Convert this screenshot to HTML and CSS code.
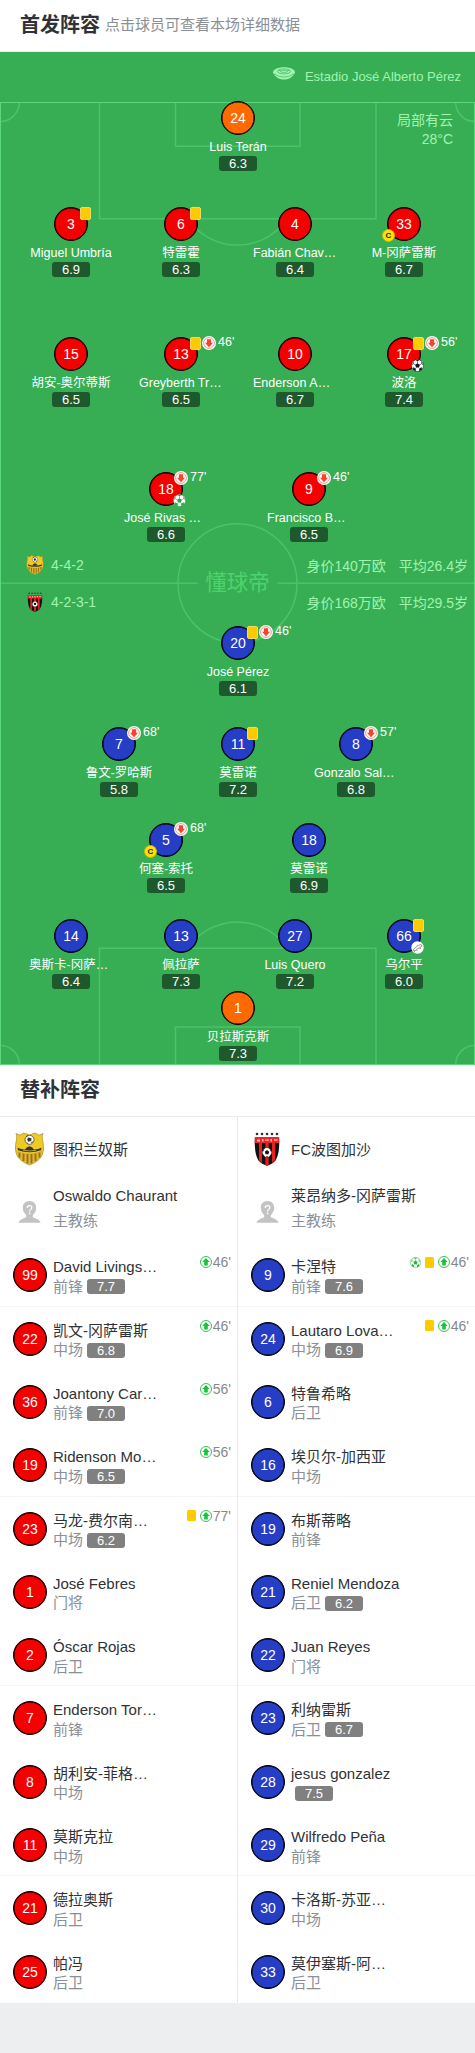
FILE: index.html
```html
<!DOCTYPE html>
<html lang="zh">
<head>
<meta charset="utf-8">
<title>首发阵容</title>
<link rel="stylesheet" href="styles.css">
</head>
<body>
<svg class="defs" width="0" height="0" aria-hidden="true">
  <symbol id="down" viewBox="0 0 14 14"><circle cx="7" cy="7" r="7" fill="#fff"/><circle cx="7" cy="7" r="5.400" fill="none" stroke="#f58a78" stroke-width=".9"/><path d="M4.900 3.200h4.200v3.600H11L7 11.200 3 6.800h1.900z" fill="#f8432c"/></symbol>
  <symbol id="up" viewBox="0 0 12 12"><circle cx="6" cy="6" r="5.500" fill="#fff" stroke="#35c553"/><path d="M4.200 9.600V6H2.300L6 1.900 9.700 6H7.800v3.600z" fill="#18c23c"/></symbol>
  <symbol id="ball" viewBox="0 0 14 14"><circle cx="7" cy="7" r="6.500" fill="#fff" stroke="currentColor" stroke-width=".6"/><path fill="currentColor" d="M7 4.500l2.500 1.800-.9 2.900H5.400l-.9-2.900zM4.600 1L7 2.400 9.400 1zM.6 6.700l2.200-1.500.3-2.500zM13.400 6.700l-2.200-1.500-.3-2.500zM2.100 11.300l.5-2.700 2.500 2.300.1 2.200zM11.900 11.300l-.5-2.700-2.500 2.300-.1 2.200z"/><path stroke="currentColor" stroke-width=".6" d="M7 2.300v2.400M2.800 5.200l1.900 1.200M11.200 5.200L9.300 6.400M5.600 9.100l-.9 1.600M8.400 9.100l.9 1.600"/></symbol>
  <symbol id="boot" viewBox="0 0 14 14"><circle cx="7" cy="7" r="6.700" fill="#fff"/><path d="M2.200 9.300C4 8 6 6.800 6.900 4.500l1.500.3 2.300-1.300 1.200 2.200c-1.500 1.200-3 2-4.500 2.400L4.500 10.500l-1.700.2z" fill="#f4f4f4" stroke="#777" stroke-width=".8"/><path d="M3.500 11.600l.8-.8M6 10.700l.8-.9M9.700 8.700l.6-1" stroke="#777"/></symbol>
  <symbol id="yellow-crest" viewBox="0 0 29 34"><path d="M1 1.500l4 1.700L8.500 1l6 1.800L20.500 1 24 3.200l4-1.700c-2 5 .8 8 .5 15.500C28 26 22 30 14.500 33 7 30 1 26 .5 17 .2 9.500 3 6.500 1 1.500z" fill="#eecb24" stroke="#a58a2c" stroke-width=".7"/><path d="M2 18.500q12.500 5.500 25 0c0 7-5.500 11-12.500 14-7-3-12.500-7-12.500-14z" fill="#e3b72b"/><path d="M4.500 20.500v5M8.500 21.500v7.500M12.500 22v9.500M16.500 22v9.500M20.500 21.500v7.500M24.500 20.500v5" stroke="#98701f" stroke-width="1.900"/><path d="M2.500 15.800q4 1.900 7.500 1.700l2-2.300 2.500-1 2.500 1 2 2.300q3.500.2 7.500-1.700l-.5 2.500q-11.500 4-23 0z" fill="#3a3823"/><path d="M8 18.300q6.500 1.300 13 0" stroke="#d5b538" fill="none" stroke-width=".8"/><circle cx="14.500" cy="7.800" r="4.500" fill="#fff" stroke="#333" stroke-width=".7"/><path d="M13 5.500l3.500.8-.3 2.700-3 .8-1-2.300zM11 4l2-.8-1 2zM18 9.300l-1 2-1.200-1zM11.500 10.500l1.500.5-.3 1z" fill="#333"/></symbol>
  <symbol id="red-crest" viewBox="0 0 26 34"><g fill="#283429"><circle cx="3" cy="2" r="1.300"/><circle cx="8" cy="2" r="1.300"/><circle cx="13" cy="2" r="1.300"/><circle cx="18" cy="2" r="1.300"/><circle cx="23" cy="2" r="1.300"/></g><path d="M1 5.500h24c.8 10-.5 18-3.500 23-2.500 3-6 4.500-8.500 5.300C10.500 33 7 31.500 4.500 28.500 1.500 23.500.2 15.500 1 5.500z" fill="#111"/><path d="M5 10h3v21l-3-3zM11.400 10h3.200v23L13 33.700l-1.600-.6zM18 10h3v18l-3 3z" fill="#ec1e1f"/><path d="M.8 5h24.400l.1 6H.7z" fill="#ee2427"/><path d="M3 7.500h3v2H3zM8 7h1.500v2.500H8zM11 7.500h4v1.300h-4zM16.500 7H18v2.500h-1.500zM20 7.300h3.500v1.400H20z" fill="#fff" opacity=".7"/><circle cx="13" cy="20.500" r="4.500" fill="#fff"/><path d="M13 18l2.200 1.700-.8 2.600h-2.800l-.8-2.600zM8.200 17.800l2.200-.5L9 19.800zM17.800 17.800l-2.200-.5L17 19.800zM11.800 25.200L13 23.700l1.200 1.500zM8.600 21.800l1.800 2.300-1.300.1zM17.400 21.800l-1.800 2.300 1.300.1z" fill="#151515"/></symbol>
  <symbol id="avatar" viewBox="0 0 24 23"><path d="M12 0c4.200 0 7 2.900 7 7 0 3.200-1.300 5.500-3.200 7.300-.8 1-.6 2.700.6 3.200 3 1.200 6.200 2.200 7.300 5.200H.3c1.100-3 4.300-4 7.300-5.200 1.200-.5 1.400-2.200.6-3.200C6.300 12.500 5 10.200 5 7c0-4.100 2.800-7 7-7z" fill="#c3c3c3"/><path d="M9.600 7.200c0-3.200 4.900-3.300 4.900-.4 0 1.900-2.400 2-2.400 4.100" fill="none" stroke="#fff" stroke-width="1.300"/><circle cx="12.100" cy="13" r=".9" fill="#fff"/></symbol>
</svg>

<header class="head"><h2>首发阵容</h2><span class="hint">点击球员可查看本场详细数据</span></header>

<section class="pitch">
  <div class="stadium">
    <svg width="22" height="13" viewBox="0 0 22 13"><path d="M0 5.500C0 2.500 5 .3 11 .3s11 2.200 11 5.200C20.500 9.500 16 12.600 11 12.600S1.500 9.500 0 5.500z" fill="#a0f4b0"/><ellipse cx="11" cy="4.400" rx="6.500" ry="2.500" fill="none" stroke="#37ae54" stroke-width=".6"/><ellipse cx="11" cy="4.300" rx="3.500" ry="1.100" fill="none" stroke="#37ae54" stroke-width=".6"/><path d="M.5 6.600q10.500 7 21 0M5 3l3 1M17 3l-3 1" fill="none" stroke="#37ae54" stroke-width=".6"/></svg>
    <span>Estadio José Alberto Pérez</span>
  </div>
  <svg class="lines" width="475" height="963" viewBox="0 0 475 963">
    <g fill="none" stroke="#4ac369" stroke-width="1.500">
      <path d="M99.500 0v116.700h276.500V0M175.500 0v44.300H300V0M188 117a60 60 0 0 0 99 0"/>
      <path d="M99.500 963V846.300h276.500V963M175.500 963v-38H300v38M188 846a60 60 0 0 1 99 0"/>
      <circle cx="237.500" cy="481.300" r="59.500"/>
      <path d="M0 481.300h197.500M277.500 481.300H475M0 19.500A19 19 0 0 0 19.300 0M475 19.500A19 19 0 0 1 455.700 0M0 943.500A19 19 0 0 1 19.300 963M475 943.500A19 19 0 0 0 455.700 963"/>
    </g>
    <rect x=".5" y=".5" width="474" height="962" fill="none" stroke="#5bd77b"/>
  </svg>
  <div class="weather">局部有云<br>28°C</div>
  <div class="brand">懂球帝</div>
  <div class="team-info home"><svg class="crest"><use href="#yellow-crest"/></svg><span>4-4-2</span><span class="value">身价140万欧</span><span>平均26.4岁</span></div>
  <div class="team-info away"><svg class="crest"><use href="#red-crest"/></svg><span>4-2-3-1</span><span class="value">身价168万欧</span><span>平均29.5岁</span></div>

  <div class="player keeper" style="left:238px;top:49px"><b class="num">24</b><span class="name">Luis Terán</span><i class="rate">6.3</i></div>

  <div class="player red" style="left:71px;top:155px"><b class="num">3</b><span class="name">Miguel Umbría</span><i class="rate">6.9</i><div class="events"><i class="card"></i></div></div>
  <div class="player red" style="left:181px;top:155px"><b class="num">6</b><span class="name">特雷霍</span><i class="rate">6.3</i><div class="events"><i class="card"></i></div></div>
  <div class="player red" style="left:295px;top:155px"><b class="num">4</b><span class="name cut">Fabián Chav…</span><i class="rate">6.4</i></div>
  <div class="player red" style="left:404px;top:155px"><b class="num">33</b><span class="name">M-冈萨雷斯</span><i class="rate">6.7</i><i class="captain">C</i></div>

  <div class="player red" style="left:71px;top:285px"><b class="num">15</b><span class="name">胡安-奥尔蒂斯</span><i class="rate">6.5</i></div>
  <div class="player red" style="left:181px;top:285px"><b class="num">13</b><span class="name cut">Greyberth Tr…</span><i class="rate">6.5</i><div class="events"><i class="card"></i><svg class="sub"><use href="#down"/></svg><span>46'</span></div></div>
  <div class="player red" style="left:295px;top:285px"><b class="num">10</b><span class="name cut">Enderson A…</span><i class="rate">6.7</i></div>
  <div class="player red" style="left:404px;top:285px"><b class="num">17</b><span class="name">波洛</span><i class="rate">7.4</i><div class="events"><i class="card"></i><svg class="sub"><use href="#down"/></svg><span>56'</span></div><svg class="extra black"><use href="#ball"/></svg></div>

  <div class="player red" style="left:166px;top:420px"><b class="num">18</b><span class="name cut">José Rivas …</span><i class="rate">6.6</i><div class="events"><svg class="sub"><use href="#down"/></svg><span>77'</span></div><svg class="extra green"><use href="#ball"/></svg></div>
  <div class="player red" style="left:309px;top:420px"><b class="num">9</b><span class="name cut">Francisco B…</span><i class="rate">6.5</i><div class="events"><svg class="sub"><use href="#down"/></svg><span>46'</span></div></div>

  <div class="player blue" style="left:238px;top:574px"><b class="num">20</b><span class="name">José Pérez</span><i class="rate">6.1</i><div class="events"><i class="card"></i><svg class="sub"><use href="#down"/></svg><span>46'</span></div></div>

  <div class="player blue" style="left:119px;top:675px"><b class="num">7</b><span class="name">鲁文-罗哈斯</span><i class="rate">5.8</i><div class="events"><svg class="sub"><use href="#down"/></svg><span>68'</span></div></div>
  <div class="player blue" style="left:238px;top:675px"><b class="num">11</b><span class="name">莫雷诺</span><i class="rate">7.2</i><div class="events"><i class="card"></i></div></div>
  <div class="player blue" style="left:356px;top:675px"><b class="num">8</b><span class="name cut">Gonzalo Sal…</span><i class="rate">6.8</i><div class="events"><svg class="sub"><use href="#down"/></svg><span>57'</span></div></div>

  <div class="player blue" style="left:166px;top:771px"><b class="num">5</b><span class="name">何塞-索托</span><i class="rate">6.5</i><div class="events"><svg class="sub"><use href="#down"/></svg><span>68'</span></div><i class="captain">C</i></div>
  <div class="player blue" style="left:309px;top:771px"><b class="num">18</b><span class="name">莫雷诺</span><i class="rate">6.9</i></div>

  <div class="player blue" style="left:71px;top:867px"><b class="num">14</b><span class="name cut">奥斯卡-冈萨…</span><i class="rate">6.4</i></div>
  <div class="player blue" style="left:181px;top:867px"><b class="num">13</b><span class="name">佩拉萨</span><i class="rate">7.3</i></div>
  <div class="player blue" style="left:295px;top:867px"><b class="num">27</b><span class="name">Luis Quero</span><i class="rate">7.2</i></div>
  <div class="player blue" style="left:404px;top:867px"><b class="num">66</b><span class="name">乌尔平</span><i class="rate">6.0</i><div class="events"><i class="card"></i></div><svg class="extra"><use href="#boot"/></svg></div>

  <div class="player keeper" style="left:238px;top:939px"><b class="num">1</b><span class="name">贝拉斯克斯</span><i class="rate">7.3</i></div>
</section>

<header class="head subs-head"><h2>替补阵容</h2></header>

<section class="bench">
  <div class="col red">
    <div class="team"><svg class="badge"><use href="#yellow-crest"/></svg><span>图积兰奴斯</span></div>
    <div class="coach"><svg class="avatar"><use href="#avatar"/></svg><div><p>Oswaldo Chaurant</p><p class="role">主教练</p></div></div>
    <div class="row line"><b class="num">99</b><div class="who"><p>David Livings…</p><p class="role">前锋<i class="rate">7.7</i></p></div><div class="ev"><svg class="in"><use href="#up"/></svg>46'</div></div>
    <div class="row"><b class="num">22</b><div class="who"><p>凯文-冈萨雷斯</p><p class="role">中场<i class="rate">6.8</i></p></div><div class="ev"><svg class="in"><use href="#up"/></svg>46'</div></div>
    <div class="row"><b class="num">36</b><div class="who"><p>Joantony Car…</p><p class="role">前锋<i class="rate">7.0</i></p></div><div class="ev"><svg class="in"><use href="#up"/></svg>56'</div></div>
    <div class="row line"><b class="num">19</b><div class="who"><p>Ridenson Mo…</p><p class="role">中场<i class="rate">6.5</i></p></div><div class="ev"><svg class="in"><use href="#up"/></svg>56'</div></div>
    <div class="row"><b class="num">23</b><div class="who"><p>马龙-费尔南…</p><p class="role">中场<i class="rate">6.2</i></p></div><div class="ev"><i class="ycard"></i><svg class="in"><use href="#up"/></svg>77'</div></div>
    <div class="row"><b class="num">1</b><div class="who"><p>José Febres</p><p class="role">门将</p></div></div>
    <div class="row line"><b class="num">2</b><div class="who"><p>Óscar Rojas</p><p class="role">后卫</p></div></div>
    <div class="row"><b class="num">7</b><div class="who"><p>Enderson Tor…</p><p class="role">前锋</p></div></div>
    <div class="row"><b class="num">8</b><div class="who"><p>胡利安-菲格…</p><p class="role">中场</p></div></div>
    <div class="row line"><b class="num">11</b><div class="who"><p>莫斯克拉</p><p class="role">中场</p></div></div>
    <div class="row"><b class="num">21</b><div class="who"><p>德拉奥斯</p><p class="role">后卫</p></div></div>
    <div class="row"><b class="num">25</b><div class="who"><p>帕冯</p><p class="role">后卫</p></div></div>
  </div>
  <div class="col blue">
    <div class="team"><svg class="badge"><use href="#red-crest"/></svg><span>FC波图加沙</span></div>
    <div class="coach"><svg class="avatar"><use href="#avatar"/></svg><div><p>莱昂纳多-冈萨雷斯</p><p class="role">主教练</p></div></div>
    <div class="row line"><b class="num">9</b><div class="who"><p>卡涅特</p><p class="role">前锋<i class="rate">7.6</i></p></div><div class="ev"><svg class="goal"><use href="#ball"/></svg><i class="ycard"></i><svg class="in"><use href="#up"/></svg>46'</div></div>
    <div class="row"><b class="num">24</b><div class="who"><p>Lautaro Lova…</p><p class="role">中场<i class="rate">6.9</i></p></div><div class="ev"><i class="ycard"></i><svg class="in"><use href="#up"/></svg>46'</div></div>
    <div class="row"><b class="num">6</b><div class="who"><p>特鲁希略</p><p class="role">后卫</p></div></div>
    <div class="row line"><b class="num">16</b><div class="who"><p>埃贝尔-加西亚</p><p class="role">中场</p></div></div>
    <div class="row"><b class="num">19</b><div class="who"><p>布斯蒂略</p><p class="role">前锋</p></div></div>
    <div class="row"><b class="num">21</b><div class="who"><p>Reniel Mendoza</p><p class="role">后卫<i class="rate">6.2</i></p></div></div>
    <div class="row line"><b class="num">22</b><div class="who"><p>Juan Reyes</p><p class="role">门将</p></div></div>
    <div class="row"><b class="num">23</b><div class="who"><p>利纳雷斯</p><p class="role">后卫<i class="rate">6.7</i></p></div></div>
    <div class="row"><b class="num">28</b><div class="who"><p>jesus gonzalez</p><p class="role"><i class="rate">7.5</i></p></div></div>
    <div class="row line"><b class="num">29</b><div class="who"><p>Wilfredo Peña</p><p class="role">前锋</p></div></div>
    <div class="row"><b class="num">30</b><div class="who"><p>卡洛斯-苏亚…</p><p class="role">中场</p></div></div>
    <div class="row"><b class="num">33</b><div class="who"><p>莫伊塞斯-阿…</p><p class="role">后卫</p></div></div>
  </div>
</section>
</body>
</html>
```
FILE: styles.css
```css
* { box-sizing: border-box; margin: 0; padding: 0; }
body {
  width: 475px;
  min-height: 2053px;
  background: #edeef0;
  color: #303236;
  font-family: "Liberation Sans", "Noto Sans CJK SC", sans-serif;
  font-size: 15px;
}
i, b { font-style: normal; font-weight: 400; }
svg { display: block; flex: none; }
.defs { position: absolute; }

.head {
  display: flex;
  align-items: center;
  height: 52px;
  padding: 0 20px 2px;
  background: #fff;
  border-bottom: 1px solid #ebedec;
}
.head h2 { font-size: 20px; line-height: 28px; }
.hint { margin-left: 5px; color: #8a8f95; line-height: 22px; }
.subs-head { border-color: #ebebeb; }

/* Pitch */
.pitch { position: relative; height: 1013px; background: #37ae54; }
.stadium {
  display: flex;
  justify-content: flex-end;
  height: 50px;
  padding: 15px 14px 0 0;
  color: #a0f4b0;
  font-size: 13px;
  line-height: 20px;
}
.stadium span { margin-left: 10px; }
.lines { width: 475px; height: 963px; }
.weather {
  position: absolute;
  top: 59px;
  right: 22px;
  color: #a0f4b0;
  font-size: 14px;
  line-height: 19px;
  text-align: right;
}
.brand {
  position: absolute;
  top: 516px;
  left: 0;
  width: 475px;
  color: #4dd36d;
  font-size: 21.500px;
  line-height: 30px;
  text-align: center;
}
.team-info {
  position: absolute;
  left: 26px;
  right: 7px;
  display: flex;
  align-items: center;
  height: 20px;
  color: #a0f4b0;
  font-size: 14px;
}
.home { top: 503px; }
.away { top: 540px; }
.crest { width: 18px; height: 20px; margin-right: 7px; }
.value { margin: 0 13px 0 auto; }

.num {
  display: block;
  flex: none;
  width: 34px;
  height: 34px;
  border: 1px solid #000;
  border-radius: 50%;
  box-shadow: inset 0 0 0 .500px #000;
  color: #fff;
  font-size: 14px;
  line-height: 32px;
  text-align: center;
}
.red .num { background: #f50000; }
.blue .num { background: #263dc5; }
.keeper .num { background: #ff6a00; }
.rate {
  display: block;
  width: 38px;
  height: 15px;
  border-radius: 3px;
  color: #fff;
  font-size: 13px;
  line-height: 16px;
  text-align: center;
}

.player {
  position: absolute;
  display: flex;
  flex-direction: column;
  align-items: center;
  width: 84px;
  margin-left: -42px;
  color: #fff;
}
.name {
  width: 84px;
  margin-top: 3px;
  font-size: 12.500px;
  line-height: 18px;
  text-align: center;
  white-space: nowrap;
}
.cut { text-align: left; }
.player .rate { margin-top: -.500px; background: #1e592d; }
.events {
  position: absolute;
  top: -1px;
  left: 50px;
  display: flex;
  align-items: center;
  height: 14px;
  font-size: 12.500px;
}
.card {
  width: 11px;
  height: 13px;
  margin: 0 1px;
  border: 1px solid #eedb69;
  border-radius: 2px;
  background: #ffca00;
}
.sub { width: 14px; height: 14px; margin-right: 2px; }
.events span { line-height: 14px; margin-top: -2px; }
.extra { position: absolute; top: 22px; left: 49px; width: 13px; height: 13px; }
.black { color: #151515; }
.green { color: #24a545; }
.captain {
  position: absolute;
  top: 22px;
  left: 20px;
  width: 13px;
  height: 13px;
  border: 1px solid #d0b800;
  border-radius: 50%;
  background: #ffe100;
  color: #222;
  font-size: 8px;
  font-weight: 700;
  line-height: 11px;
  text-align: center;
}

/* Substitutes */
.bench { display: flex; height: 886px; background: #fff; }
.col { width: 237px; border-right: 1px solid #e8e8e8; }
.col + .col { width: 237px; border: 0; }
.col.red { width: 238px; }
.team { display: flex; align-items: center; height: 63px; padding-left: 15px; }
.badge { width: 29px; height: 34px; margin-right: 9px; }
.blue .badge { width: 26px; margin: 0 11px 0 1px; }
.coach { display: flex; align-items: flex-start; height: 63.200px; padding: 4px 0 0 18px; }
.avatar { width: 23px; height: 22px; margin: 17px 12px 0 0; }
.coach p { line-height: 24px; }
.coach .role { line-height: 26px; }
.role { color: #8a9097; }
.row { display: flex; height: 63.333px; padding: 15px 6px 0 13px; }
.col .line { border-bottom: 1px solid #f5f5f5; }
.who { margin: -3px 0 0 6px; white-space: nowrap; }
.who p { height: 21px; line-height: 24px; }
.who .role { display: flex; align-items: center; }
.who .rate { margin-left: 4px; background: #808080; }
.ev {
  display: flex;
  align-items: center;
  height: 14px;
  margin: -3px 0 0 auto;
  color: #888;
  font-size: 14px;
}
.in { width: 12px; height: 12px; margin-right: 1px; }
.ycard { width: 9px; height: 11px; margin-right: 4px; border-radius: 1.500px; background: #ffca00; }
.goal { width: 11px; height: 11px; margin-right: 4px; color: #24b545; }
```
